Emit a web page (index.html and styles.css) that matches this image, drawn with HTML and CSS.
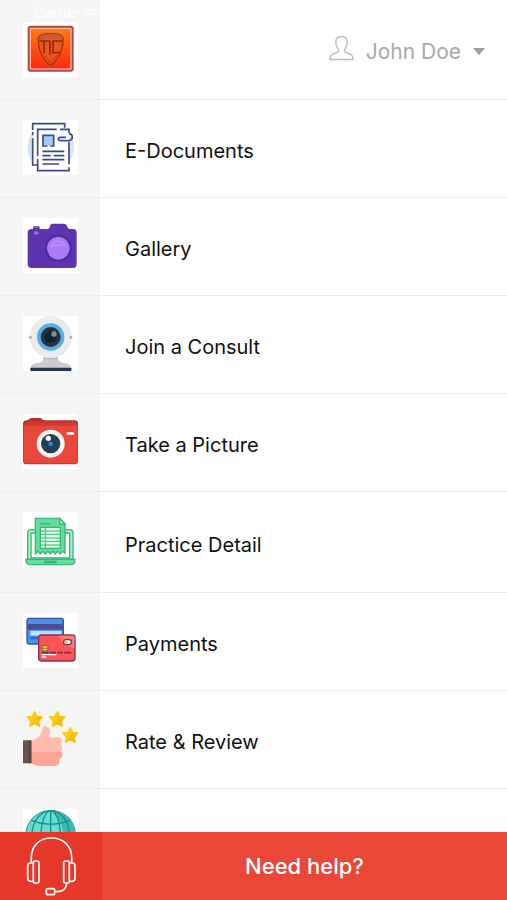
FILE: index.html
```html
<!DOCTYPE html>
<html lang="en">
<head>
    <meta charset="UTF-8">
    <meta name="viewport" content="width=device-width, initial-scale=1.0">
    <title>Menu</title>
    <link rel="stylesheet" href="styles.css">
</head>
<body>
    <header class="header">
        <div class="icon-cell">
            <span class="status">Carrier
                <svg width="14" height="10" viewBox="0 0 14 10" fill="none" stroke="#fff" stroke-width="2"><path d="M1 4Q7-1 13 4M4 7Q7 4 10 7"/></svg>
            </span>
            <svg class="icon" viewBox="68 66 165 165">
                <defs>
                    <linearGradient id="logoFill" x1="0" y1="0" x2="0" y2="1">
                        <stop offset="0" stop-color="#ff7a12"/>
                        <stop offset="1" stop-color="#fb2a12"/>
                    </linearGradient>
                </defs>
                <rect x="82" y="77" width="138" height="138" rx="9" fill="#a84a4c"/>
                <rect x="88" y="83" width="126" height="126" rx="4" fill="#ffb49a"/>
                <rect x="92" y="87" width="118" height="118" fill="url(#logoFill)"/>
                <path d="M114 115Q116 101 151 101Q186 101 188 115Q189 154 168 178Q160 194 151 194Q142 194 133 178Q113 154 114 115Z" fill="#ee5518" stroke="#a0340f" stroke-width="4"/>
                <path d="M114 115Q118 101 151 101Q184 101 188 115Q150 108 114 120Z" fill="#c05a42"/>
                <path d="M117 123H149M131 123V160M149 123V164M186 123H158V158H179" fill="none" stroke="#8f2c10" stroke-width="5"/>
                <path d="M133 166L151 190L169 166" fill="none" stroke="#b8380f" stroke-width="3"/>
            </svg>
        </div>
        <button type="button" class="user">
            <svg width="25" height="26" viewBox="0 0 26 27" fill="none" stroke="#bdbdbd" stroke-width="1.5" stroke-linejoin="round"><path d="M13 1.5C9 1.5 7 4 7 7.500C7 11 8.500 12.500 9.500 14.500C10.500 17 9 18 6 19C2.500 20 1 22 1 25.500H25C25 22 23.500 20 20 19C17 18 15.500 17 16.500 14.500C17.500 12.500 19 11 19 7.500C19 4 17 1.500 13 1.500Z"/></svg>
            <span>John Doe</span>
            <svg width="12" height="7" viewBox="0 0 12 7"><path d="M0 0H12L6 7Z" fill="#9c9c9c"/></svg>
        </button>
    </header>

    <nav class="menu">
        <a href="#" class="item">
            <span class="icon-cell">
                <svg class="icon" viewBox="68 60 165 165" fill="none" stroke="#3a4a8c" stroke-width="5">
                    <circle cx="151" cy="142" r="70" fill="#d8e3f3" stroke="none"/>
                    <path d="M97 74H193V208H112V196H97Z" fill="#fff" stroke="none"/>
                    <path d="M97 90V71H193V83M97 96V106M97 115V195H110"/>
                    <path d="M112 88H206V212H112Z" fill="#fff" stroke="none"/>
                    <path d="M112 168V88H169M179 88H206V99M206 126V193M206 202V212H112V177"/>
                    <path d="M129 106H159V137H129Z" fill="#a4cbfb" stroke="none"/>
                    <path d="M141 138H128V106H160V138H150"/>
                    <path d="M197 112H181Q174 112 174 117Q174 122 181 122H207Q216 120 216 112Q216 102 206 101"/>
                    <path d="M126 154H192M126 167H151M160 167H192M126 179H192M126 192H176"/>
                </svg>
            </span>
            <span class="label">E-Documents</span>
        </a>
        <a href="#" class="item">
            <span class="icon-cell">
                <svg class="icon" viewBox="68 54 165 165">
                    <path d="M98 87V82Q98 79 102 79H114Q118 79 118 83V87H141Q148 87 149 78Q150 71 158 71H191Q198 71 200 78Q202 87 210 87H218Q229 87 229 98V193Q229 204 218 204H94Q82 204 82 193V98Q82 87 94 87Z" fill="#5b34ae"/>
                    <path d="M98 83Q98 79 102 79H114Q118 79 118 83Z" fill="#8f6bd4"/>
                    <ellipse cx="108" cy="99" rx="8" ry="5" fill="#9272d4"/>
                    <circle cx="174" cy="145" r="41" fill="#4f2b9f"/>
                    <circle cx="174" cy="145" r="34" fill="#a97df4"/>
                    <path d="M152 140Q158 124 174 123Q191 124 196 140" fill="none" stroke="#b892fa" stroke-width="5"/>
                    <path d="M159 139Q174 128 188 139" fill="none" stroke="#b48bf9" stroke-width="6"/>
                </svg>
            </span>
            <span class="label">Gallery</span>
        </a>
        <a href="#" class="item">
            <span class="icon-cell">
                <svg class="icon" viewBox="68 48 165 165">
                    <path d="M130 168H172Q172 186 187 188Q212 190 213 204H90Q91 190 116 188Q131 186 130 168Z" fill="#c9cdd1"/>
                    <path d="M132 170H170L173 178H129Z" fill="#b5babf"/>
                    <rect x="90" y="203" width="123" height="10" rx="2" fill="#25364a"/>
                    <circle cx="151" cy="111" r="63" fill="#ebebeb"/>
                    <circle cx="90" cy="112" r="4" fill="#a9a9a9"/>
                    <circle cx="212" cy="112" r="4" fill="#a9a9a9"/>
                    <circle cx="151" cy="111" r="41" fill="#55aee5"/>
                    <circle cx="151" cy="111" r="30" fill="#27333f"/>
                    <circle cx="151" cy="111" r="18" fill="#18212b"/>
                    <circle cx="161" cy="102" r="8" fill="#87939c"/>
                </svg>
            </span>
            <span class="label">Join a Consult</span>
        </a>
        <a href="#" class="item">
            <span class="icon-cell">
                <svg class="icon" viewBox="68 58 165 165">
                    <path d="M78 79L88 72Q90 70 94 70H120Q124 70 128 76L132 79Z" fill="#b92f28"/>
                    <rect x="68" y="77" width="166" height="132" rx="11" fill="#bf332b"/>
                    <path d="M70 97H232V198Q232 206 223 206H79Q70 206 70 198Z" fill="#ea483c"/>
                    <path d="M70 91Q71 81 82 81H220Q231 82 232 92V99H70Z" fill="#cb3a31"/>
                    <rect x="70" y="93" width="162" height="12" fill="#ea483c"/>
                    <rect x="199" y="113" width="22" height="7" rx="1" fill="#fff"/>
                    <circle cx="151" cy="147" r="42" fill="#f7f7f5"/>
                    <circle cx="151" cy="147" r="29" fill="#2c3d50"/>
                    <circle cx="151" cy="147" r="16" fill="#17405f"/>
                    <circle cx="151" cy="148" r="7" fill="#2687cb"/>
                    <circle cx="144" cy="131" r="8" fill="#fff"/>
                </svg>
            </span>
            <span class="label">Take a Picture</span>
        </a>
        <a href="#" class="item item-tall">
            <span class="icon-cell">
                <svg class="icon" viewBox="68 52 165 165" fill="none" stroke="#35b878" stroke-width="4">
                    <path d="M82 194V116Q82 105 93 105H207Q218 105 218 116V194Z" fill="#a9f2c6"/>
                    <path d="M92 190V115H208V190Z" fill="#fff"/>
                    <path d="M105 71H178L194 88V176L187 170L180 178L172 170L165 178L157 170L150 178L142 170L135 178L127 170L120 178L112 170L105 178Z" fill="#63dd99"/>
                    <path d="M178 71V88H194Z" fill="#b6f7cf"/>
                    <path d="M119 87H150"/>
                    <path d="M120 98H180V161H120Z" fill="#d9ffe7"/>
                    <path d="M120 109H180M120 119H180M120 130H180M120 140H180M120 151H180M135 98V161" stroke-width="3"/>
                    <path d="M77 194H224Q225 210 211 210H90Q76 210 77 194Z" fill="#68dfa0"/>
                    <path d="M131 202H169" stroke-width="8"/>
                </svg>
            </span>
            <span class="label">Practice Detail</span>
        </a>
        <a href="#" class="item">
            <span class="icon-cell">
                <svg class="icon" viewBox="68 57 165 165">
                    <rect x="80" y="73" width="109" height="77" rx="7" fill="#4791ef" stroke="#454e91" stroke-width="4"/>
                    <rect x="82" y="90" width="105" height="17" fill="#4e4a92"/>
                    <rect x="90" y="111" width="94" height="14" fill="#b7e4ff"/>
                    <path d="M90 132H115" stroke="#326bc0" stroke-width="8"/>
                    <rect x="115" y="123" width="109" height="78" rx="8" fill="#ff5259" stroke="#7b3659" stroke-width="4"/>
                    <path d="M176 125H218Q222 125 222 130V162Q188 155 176 125Z" fill="#ff7b7b"/>
                    <rect x="190" y="137" width="23" height="15" rx="7" fill="#fff" stroke="#623b58" stroke-width="4"/>
                    <path d="M193 140H202V149H193Z" fill="#f0c42d"/>
                    <rect x="125" y="154" width="18" height="17" rx="3" fill="#edc13b" stroke="#78502e" stroke-width="3"/>
                    <path d="M126 163H142" stroke="#78502e" stroke-width="2"/>
                    <path d="M124 176H145M148 176H167M170 176H188M191 176H213" stroke="#843049" stroke-width="5"/>
                    <path d="M124 182H168M124 189H138" stroke="#fff" stroke-width="4"/>
                </svg>
            </span>
            <span class="label">Payments</span>
        </a>
        <a href="#" class="item">
            <span class="icon-cell">
                <svg class="icon icon-plain" viewBox="68 62 165 165">
                    <defs>
                        <path id="star" d="M0-23L7-9L23-7L12 5L15 21L0 14L-15 21L-12 5L-23-7L-7-9Z" fill="#fdcb12" stroke="#fdcb12" stroke-width="4" stroke-linejoin="round"/>
                        <path id="starShade" d="M7-9L23-7L12 5L15 21L0 14L-13 19Z" fill="#fabb0d"/>
                    </defs>
                    <use href="#star" x="103" y="87"/><use href="#starShade" x="103" y="87"/>
                    <use href="#star" x="171" y="87"/><use href="#starShade" x="171" y="87"/>
                    <use href="#star" x="210" y="135"/><use href="#starShade" x="210" y="135"/>
                    <path d="M92 152Q108 147 117 137Q124 128 126 115Q129 105 140 109Q152 114 149 128L145 141H174Q187 143 184 153Q183 159 180 161Q187 165 186 174Q185 181 181 183Q188 188 186 197Q184 204 176 206Q180 219 170 225Q165 227 157 227H119Q102 227 92 216Z" fill="#ffbcaa"/>
                    <path d="M92 185H182Q188 190 186 197Q184 204 176 206Q180 219 170 225Q165 227 157 227H119Q102 227 92 216Z" fill="#ffa593"/>
                    <rect x="68" y="150" width="25" height="69" rx="2" fill="#655450"/>
                    <rect x="85" y="150" width="8" height="69" fill="#584641"/>
                </svg>
            </span>
            <span class="label">Rate &amp; Review</span>
        </a>
        <a href="#" class="item" aria-label="Website">
            <span class="icon-cell">
                <svg class="icon" viewBox="68 76 165 165" fill="none" stroke="#168f91" stroke-width="4">
                    <circle cx="151" cy="155" r="74" fill="#68dccd" stroke="#2fa9a6"/>
                    <path d="M151 81Q224 83 225 155Q224 228 151 229Q190 190 190 155Q190 115 151 81Z" fill="#3bb9b2" stroke="none"/>
                    <ellipse cx="151" cy="155" rx="29" ry="74"/>
                    <ellipse cx="151" cy="155" rx="56" ry="74"/>
                    <path d="M151 81V229M94 110Q151 133 208 110M78 155H224"/>
                </svg>
            </span>
        </a>
    </nav>

    <button type="button" class="help">
        <span class="help-icon">
            <svg width="50" height="60" viewBox="77 155 150 180" fill="none" stroke="#fff" stroke-width="5" stroke-linejoin="round">
                <path d="M93 235V220C93 184 118 161 153 161C190 161 214 186 214 220V235"/>
                <path d="M99 236H90Q82 236 82 244V282Q82 291 91 291H99M207 236H216Q224 236 224 244V282Q224 291 215 291H207"/>
                <rect x="99" y="230" width="17" height="66" rx="5"/>
                <rect x="190" y="230" width="17" height="66" rx="5"/>
                <path d="M199 297Q197 322 170 322H164"/>
                <rect x="138" y="313" width="25" height="18" rx="4"/>
            </svg>
        </span>
        <span class="help-label">Need help?</span>
    </button>
</body>
</html>
```
FILE: styles.css
```css
* {
    box-sizing: border-box;
}

body {
    font-family: Inter, "Liberation Sans", sans-serif;
    margin: 0;
    height: 100vh;
    display: flex;
    flex-direction: column;
    background-color: #fff;
    color: #111;
}

button {
    font-family: inherit;
    border: none;
    background: none;
    padding: 0;
    cursor: pointer;
}

.header {
    display: flex;
    flex-shrink: 0;
    justify-content: space-between;
    height: 100px;
    border-bottom: 1px solid #ebebeb;
}

.icon-cell {
    position: relative;
    flex-shrink: 0;
    width: 100px;
    padding: 20px 0 0 23px;
    background-color: #f5f5f5;
}

.header .icon-cell {
    padding-top: 22px;
}

.icon {
    display: block;
    width: 55px;
    height: 55px;
    background-color: #fff;
}

.icon-plain {
    background: none;
}

/* sits over the top of the side strip */
.status {
    position: absolute;
    top: 4px;
    left: 34px;
    color: #fff;
    font-size: 14px;
    white-space: nowrap;
}

.user {
    display: flex;
    align-items: center;
    gap: 12px;
    padding: 4px 22px 0 0;
    font-size: 21px;
    color: #a9a9a9;
}

.user svg:first-child {
    margin-bottom: 8px;
}

.menu {
    flex: 1;
    min-height: 0;
    overflow: hidden;
}

.item {
    display: flex;
    height: 98px;
    border-bottom: 1px solid #ebebeb;
    color: inherit;
    text-decoration: none;
}

.item-tall {
    height: 101px;
}

.label {
    align-self: center;
    padding: 5px 0 0 25px;
    font-size: 20px;
    line-height: 24px;
}

.help {
    display: flex;
    flex-shrink: 0;
    height: 68px;
    background-color: #e94738;
    color: #fff;
}

.help-icon {
    display: flex;
    align-items: center;
    justify-content: center;
    width: 102px;
    height: 100%;
    background-color: #e53829;
}

.help-label {
    flex: 1;
    align-self: center;
    font-size: 22px;
    font-weight: 500;
}
```
